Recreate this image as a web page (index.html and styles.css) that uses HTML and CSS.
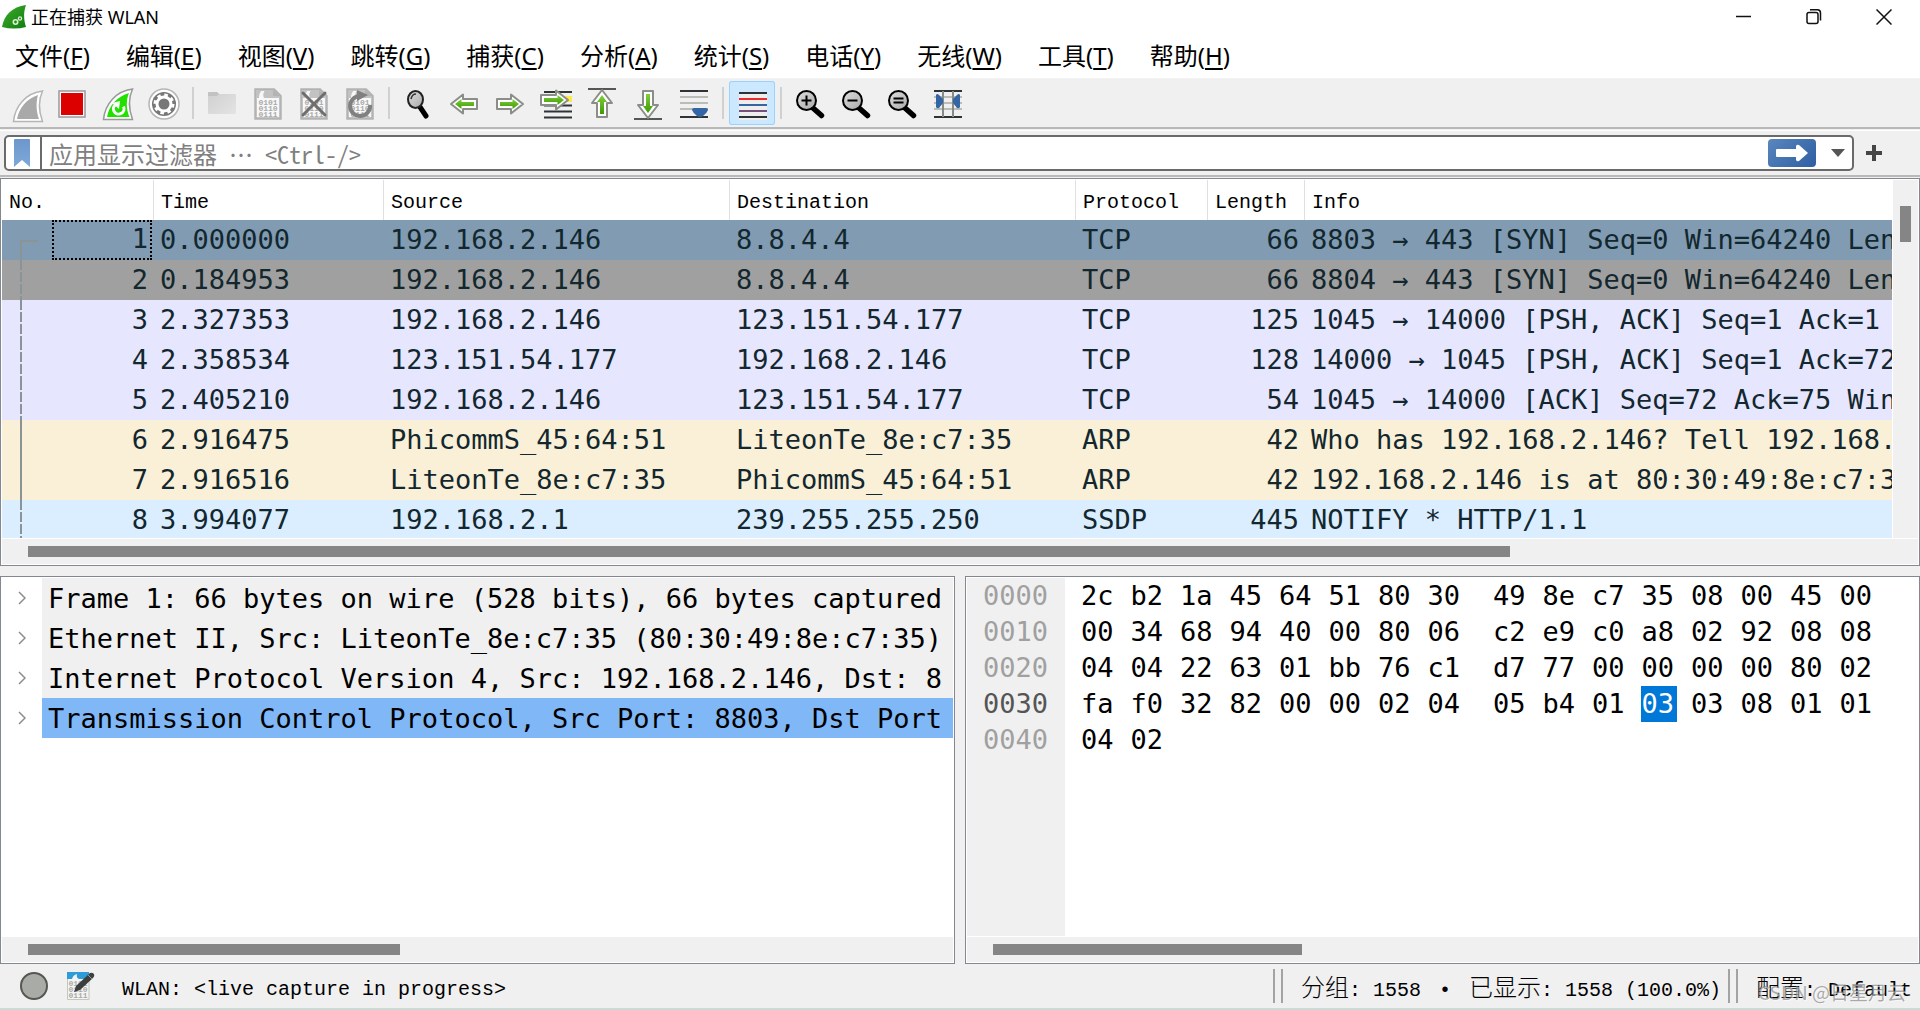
FILE: index.html
```html
<!DOCTYPE html>
<html lang="zh-CN">
<head>
<meta charset="utf-8">
<title>正在捕获 WLAN</title>
<link rel="stylesheet" href="styles.css">
</head>
<body>
<svg width="0" height="0" class="defs" aria-hidden="true">
  <defs>
    <linearGradient id="leaf" x1="0" y1="0" x2="0" y2="1"><stop offset="0" stop-color="#7fd03c"/><stop offset="1" stop-color="#3f9a06"/></linearGradient>
    <linearGradient id="lens" x1="0" y1="0" x2="1" y2="1"><stop offset="0" stop-color="#dedede"/><stop offset="1" stop-color="#a9a9a9"/></linearGradient>
    <linearGradient id="mark" x1="0" y1="0" x2="0" y2="1"><stop offset="0" stop-color="#6d97cb"/><stop offset="1" stop-color="#7fa8da"/></linearGradient>
    <linearGradient id="app" x1="0" y1="0" x2="1" y2="1"><stop offset="0" stop-color="#3fae2a"/><stop offset="1" stop-color="#107c10"/></linearGradient>
    <linearGradient id="folder" x1="0" y1="0" x2="1" y2="1"><stop offset="0" stop-color="#cfcfcf"/><stop offset="1" stop-color="#e4e4e4"/></linearGradient>
    <g id="doc">
      <path d="M10.500 8.500H29L35.500 15V37.500H10.500Z" fill="#f8f8f8" stroke="#b3b3b3" stroke-width="2.500"/>
      <path d="M11 9H17Q14 12 14 17H11ZM19 11C18 13 18 15 19 17H34.500V15L28 9H20Z" fill="#c2c2c2"/>
      <path d="M28 9V15H35Z" fill="#b3b3b3"/>
      <text x="23" y="24" class="bits">0101</text><text x="23" y="30" class="bits">0110</text><text x="23" y="36" class="bits">0111</text>
    </g>
    <g id="glass">
      <path d="M26 27L34.500 34.500" stroke="#000" stroke-width="5.500" stroke-linecap="round"/>
      <circle cx="19.500" cy="19.500" r="9.500" fill="url(#lens)" stroke="#000" stroke-width="2"/>
    </g>
  </defs>
</svg>

<div class="window">
  <header class="titlebar">
    <svg class="app-icon" width="24" height="24" viewBox="0 0 24 24" aria-hidden="true"><path d="M24 0C10 2 2 10 0 22Q12 25 24 22C22 16 21 8 24 0Z" fill="url(#app)"/><circle cx="13.500" cy="17" r="2.200" fill="none" stroke="#d9f0d4" stroke-width="1.600"/><circle cx="18" cy="13.500" r="1.600" fill="none" stroke="#d9f0d4" stroke-width="1.300"/></svg>
    <h1 class="title">正在捕获 WLAN</h1>
    <div class="window-buttons">
      <button type="button" aria-label="最小化"><svg width="16" height="16" viewBox="0 0 16 16"><path d="M0 7.500H15"/></svg></button>
      <button type="button" aria-label="还原"><svg width="16" height="16" viewBox="0 0 16 16"><rect x="1" y="3.500" width="11" height="11" rx="2"/><path d="M4 .8H11.500Q14.500 1 14.500 4V11.500"/></svg></button>
      <button type="button" aria-label="关闭"><svg width="16" height="16" viewBox="0 0 16 16"><path d="M.5 .5L15.500 15.500M15.500 .5L.5 15.500"/></svg></button>
    </div>
  </header>

  <nav class="menubar">
    <button type="button">文件(<u>F</u>)</button>
    <button type="button">编辑(<u>E</u>)</button>
    <button type="button">视图(<u>V</u>)</button>
    <button type="button">跳转(<u>G</u>)</button>
    <button type="button">捕获(<u>C</u>)</button>
    <button type="button">分析(<u>A</u>)</button>
    <button type="button">统计(<u>S</u>)</button>
    <button type="button">电话(<u>Y</u>)</button>
    <button type="button">无线(<u>W</u>)</button>
    <button type="button">工具(<u>T</u>)</button>
    <button type="button">帮助(<u>H</u>)</button>
  </nav>

  <div class="toolbar" role="toolbar" aria-label="主工具栏">
    <button type="button" aria-label="开始捕获"><svg viewBox="0 0 46 44"><path d="M39.500 10C23 12 12 25 10.500 40.500H39.500C36 31 35 20 39.500 10Z" fill="#fff" stroke="#b5b5b5" stroke-width="1.500"/><path d="M35 14C23 18 16 27 14 38H36C33 30 33 21 35 14Z" fill="#a9a9a9"/></svg></button>
    <button type="button" aria-label="停止捕获"><svg viewBox="0 0 46 44"><rect x="10" y="10" width="26" height="26" fill="#fff" stroke="#999" stroke-width="1.500"/><rect x="12" y="12" width="22" height="22" fill="#d00"/></svg></button>
    <button type="button" aria-label="重新捕获"><svg viewBox="0 0 46 44"><path d="M37.500 8C21 10 10 23 8.500 38.500H37.500C34 29 33 18 37.500 8Z" fill="#fff" stroke="#999" stroke-width="1.500"/><path d="M34 12C21 16 14 25 12 36H34.500C31 28 31 19 34 12Z" fill="#22e000"/><path d="M20 24A5.300 5.300 0 1 0 28.500 25.500" fill="none" stroke="#fff" stroke-width="3"/><path d="M17 22L25 20L24 28Z" fill="#fff"/></svg></button>
    <button type="button" aria-label="捕获选项"><svg viewBox="0 0 46 44"><circle cx="23" cy="23" r="15" fill="#fff" stroke="#b5b5b5" stroke-width="1.500"/><circle cx="23" cy="23" r="12" fill="#777"/><circle cx="23" cy="23" r="7" fill="none" stroke="#fff" stroke-width="3"/><circle cx="23" cy="23" r="9" fill="none" stroke="#fff" stroke-width="3" stroke-dasharray="3.500 3.570"/></svg></button>
    <span class="divider"></span>
    <button type="button" aria-label="打开" disabled><svg viewBox="0 0 46 44"><path d="M9 13Q9 11 11 11H18L20 13H36Q37 13 37 14V32Q37 33 36 33H10Q9 33 9 32Z" fill="url(#folder)"/><path d="M9 15V12Q9 11 10 11H18L20 13L18 15Z" fill="#c2c2c2"/></svg></button>
    <button type="button" aria-label="保存" disabled><svg viewBox="0 0 46 44"><use href="#doc"/></svg></button>
    <button type="button" aria-label="关闭文件" disabled><svg viewBox="0 0 46 44"><use href="#doc"/><path d="M12 12L34 34M34 12L12 34" stroke="#6e6e6e" stroke-width="3" stroke-linecap="round"/></svg></button>
    <button type="button" aria-label="重新加载" disabled><svg viewBox="0 0 46 44"><use href="#doc"/><path d="M23 15A10 10 0 1 0 33 24" fill="none" stroke="#808080" stroke-width="4"/><path d="M20 9L31 14L20 20Z" fill="#808080"/></svg></button>
    <span class="divider"></span>
    <button type="button" aria-label="查找分组"><svg viewBox="0 0 46 44"><path d="M25 26L31 35" stroke="#000" stroke-width="5" stroke-linecap="round"/><ellipse cx="20.500" cy="18.500" rx="7.500" ry="8.500" fill="url(#lens)" stroke="#222" stroke-width="2"/><path d="M16 18Q17 13 21 13" fill="none" stroke="#333" stroke-width="1.500"/></svg></button>
    <button type="button" aria-label="后退"><svg viewBox="0 0 46 44"><path d="M10 23L22 13.500V18H36V28H22V32.500Z" fill="#fff" stroke="#8b8d88" stroke-width="2" stroke-linejoin="round"/><path d="M14 23L20.500 18V21H33V25H20.500V28Z" fill="url(#leaf)"/></svg></button>
    <button type="button" aria-label="前进"><svg viewBox="0 0 46 44"><path d="M36 23L24 13.500V18H10V28H24V32.500Z" fill="#fff" stroke="#8b8d88" stroke-width="2" stroke-linejoin="round"/><path d="M32 23L25.500 18V21H13V25H25.500V28Z" fill="url(#leaf)"/></svg></button>
    <button type="button" aria-label="转到分组"><svg viewBox="0 0 46 44"><path d="M11 11H39M11 24.500H39M11 30.500H39M11 36.500H39" stroke="#2e3436" stroke-width="2"/><path d="M28 15H39V21H28Z" fill="#fce94f"/><path d="M35 19L23 9.500V14H8V24H23V28.500Z" fill="#fff" stroke="#8b8d88" stroke-width="2" stroke-linejoin="round"/><path d="M31 19L24.500 14V17H11V21H24.500V24Z" fill="url(#leaf)"/></svg></button>
    <button type="button" aria-label="首个分组"><svg viewBox="0 0 46 44"><path d="M9 8H37" stroke="#555753" stroke-width="2"/><path d="M23 9L33 22H28V36H18V22H13Z" fill="#fff" stroke="#8b8d88" stroke-width="2" stroke-linejoin="round"/><path d="M23 14L28 21H25V33H21V21H18Z" fill="url(#leaf)"/></svg></button>
    <button type="button" aria-label="最后分组"><svg viewBox="0 0 46 44"><path d="M9 38H37" stroke="#555753" stroke-width="2"/><path d="M23 37L33 24H28V10H18V24H13Z" fill="#fff" stroke="#8b8d88" stroke-width="2" stroke-linejoin="round"/><path d="M23 32L28 25H25V13H21V25H18Z" fill="url(#leaf)"/></svg></button>
    <button type="button" aria-label="自动滚动"><svg viewBox="0 0 46 44"><path d="M9 10H37M9 36H37" stroke="#2e3436" stroke-width="2"/><path d="M9 16H37M9 22H37M9 28H37" stroke="#babdb6" stroke-width="2"/><path d="M21 29Q21 27 23 27H35Q37 27 37 29Q36 32 32 35Q29 37 26 35Q22 32 21 29Z" fill="#3465a4"/></svg></button>
    <span class="divider"></span>
    <button type="button" class="checked" aria-label="着色" aria-pressed="true"><svg viewBox="0 0 46 44"><path d="M10 11H38V39H10Z" fill="#eeeeec"/><path d="M10 12H38M10 36H38" stroke="#2e3436" stroke-width="2"/><path d="M10 18H38" stroke="#ef2929" stroke-width="2"/><path d="M10 24H38" stroke="#3465a4" stroke-width="2"/><path d="M10 30H38" stroke="#75507b" stroke-width="2"/></svg></button>
    <span class="divider"></span>
    <button type="button" aria-label="放大"><svg viewBox="0 0 46 44"><use href="#glass"/><path d="M14.500 19.500H24.500M19.500 14.500V24.500" stroke="#000" stroke-width="2"/></svg></button>
    <button type="button" aria-label="缩小"><svg viewBox="0 0 46 44"><use href="#glass"/><path d="M14.500 19.500H24.500" stroke="#000" stroke-width="2"/></svg></button>
    <button type="button" aria-label="正常大小"><svg viewBox="0 0 46 44"><use href="#glass"/><path d="M14.500 17.500H24.500M14.500 21.500H24.500" stroke="#000" stroke-width="2"/></svg></button>
    <button type="button" aria-label="调整列宽"><svg viewBox="0 0 46 44"><path d="M9 10H37M9 36H37" stroke="#2e3436" stroke-width="2"/><path d="M9 16H37M9 22H37M9 28H37" stroke="#babdb6" stroke-width="2"/><path d="M18 10V36M28 10V36" stroke="#888a85" stroke-width="2"/><path d="M11 14Q12 12 14 14L18 18V22L14 27Q12 28 11 26ZM35 14Q34 12 32 14L28 18V22L32 27Q34 28 35 26Z" fill="#3465a4"/></svg></button>
  </div>

  <form class="filterbar">
    <div class="filterbox">
      <button type="button" class="bookmark" aria-label="书签"><svg width="16" height="28" viewBox="0 0 16 28"><path d="M0 1Q0 0 1 0H15Q16 0 16 1V28L8 21L0 28Z" fill="url(#mark)"/></svg></button>
      <input type="text" class="filter" aria-label="显示过滤器" placeholder="应用显示过滤器 … &lt;Ctrl-/&gt;">
      <button type="button" class="apply" aria-label="应用"><svg width="48" height="28" viewBox="0 0 48 28"><path d="M9 10H28V7Q29 5 31 6L40 14L31 22Q29 23 28 21V18H9Q8 18 8 17V11Q8 10 9 10Z" fill="#fff"/></svg></button>
      <button type="button" class="history" aria-label="历史"><svg width="14" height="8" viewBox="0 0 14 8"><path d="M0 0H14L7 8Z" fill="#555"/></svg></button>
    </div>
    <button type="button" class="plus" aria-label="添加"><svg width="16" height="16" viewBox="0 0 16 16"><path d="M8 0V16M0 8H16" stroke="#454545" stroke-width="4"/></svg></button>
  </form>

  <main class="panes">
    <section class="pane packets">
      <div class="packet-view">
        <table class="packet-table">
          <colgroup><col class="c-no"><col class="c-time"><col class="c-addr"><col class="c-addr"><col class="c-proto"><col class="c-len"><col></colgroup>
          <thead><tr><th>No.</th><th>Time</th><th>Source</th><th>Destination</th><th>Protocol</th><th>Length</th><th>Info</th></tr></thead>
          <tbody>
            <tr class="selected"><td class="num first"><span class="focus">1</span></td><td>0.000000</td><td>192.168.2.146</td><td>8.8.4.4</td><td>TCP</td><td class="num">66</td><td>8803 → 443 [SYN] Seq=0 Win=64240 Len=0</td></tr>
            <tr class="syn"><td class="num dashed">2</td><td>0.184953</td><td>192.168.2.146</td><td>8.8.4.4</td><td>TCP</td><td class="num">66</td><td>8804 → 443 [SYN] Seq=0 Win=64240 Len=0</td></tr>
            <tr class="tcp"><td class="num dashed">3</td><td>2.327353</td><td>192.168.2.146</td><td>123.151.54.177</td><td>TCP</td><td class="num">125</td><td>1045 → 14000 [PSH, ACK] Seq=1 Ack=1 Win</td></tr>
            <tr class="tcp"><td class="num dashed">4</td><td>2.358534</td><td>123.151.54.177</td><td>192.168.2.146</td><td>TCP</td><td class="num">128</td><td>14000 → 1045 [PSH, ACK] Seq=1 Ack=72 Win</td></tr>
            <tr class="tcp"><td class="num dashed">5</td><td>2.405210</td><td>192.168.2.146</td><td>123.151.54.177</td><td>TCP</td><td class="num">54</td><td>1045 → 14000 [ACK] Seq=72 Ack=75 Win=5</td></tr>
            <tr class="arp"><td class="num solid">6</td><td>2.916475</td><td>PhicommS_45:64:51</td><td>LiteonTe_8e:c7:35</td><td>ARP</td><td class="num">42</td><td>Who has 192.168.2.146? Tell 192.168.2.1</td></tr>
            <tr class="arp"><td class="num solid">7</td><td>2.916516</td><td>LiteonTe_8e:c7:35</td><td>PhicommS_45:64:51</td><td>ARP</td><td class="num">42</td><td>192.168.2.146 is at 80:30:49:8e:c7:35</td></tr>
            <tr class="ssdp"><td class="num dashed">8</td><td>3.994077</td><td>192.168.2.1</td><td>239.255.255.250</td><td>SSDP</td><td class="num">445</td><td>NOTIFY * HTTP/1.1</td></tr>
          </tbody>
        </table>
      </div>
      <div class="vscroll"><div class="thumb" style="height:10%"></div></div>
      <div class="hscroll"><div class="thumb" style="width:79.5%"></div></div>
    </section>

    <div class="lower">
      <section class="pane">
        <ul class="tree">
          <li><button type="button" class="expand" aria-label="展开"><svg width="8" height="14" viewBox="0 0 8 14"><path d="M1 1L7 7L1 13"/></svg></button><span>Frame 1: 66 bytes on wire (528 bits), 66 bytes captured</span></li>
          <li><button type="button" class="expand" aria-label="展开"><svg width="8" height="14" viewBox="0 0 8 14"><path d="M1 1L7 7L1 13"/></svg></button><span>Ethernet II, Src: LiteonTe_8e:c7:35 (80:30:49:8e:c7:35)</span></li>
          <li><button type="button" class="expand" aria-label="展开"><svg width="8" height="14" viewBox="0 0 8 14"><path d="M1 1L7 7L1 13"/></svg></button><span>Internet Protocol Version 4, Src: 192.168.2.146, Dst: 8</span></li>
          <li class="current"><button type="button" class="expand" aria-label="展开"><svg width="8" height="14" viewBox="0 0 8 14"><path d="M1 1L7 7L1 13"/></svg></button><span>Transmission Control Protocol, Src Port: 8803, Dst Port</span></li>
        </ul>
        <div class="hscroll"><div class="thumb" style="width:41.4%"></div></div>
      </section>

      <section class="pane">
        <div class="bytes">
          <table class="hex">
            <colgroup><col class="c-off"><col span="8"><col class="c-gap"><col span="8"></colgroup>
            <tbody>
              <tr><th>0000</th><td>2c</td><td>b2</td><td>1a</td><td>45</td><td>64</td><td>51</td><td>80</td><td>30</td><td></td><td>49</td><td>8e</td><td>c7</td><td>35</td><td>08</td><td>00</td><td>45</td><td>00</td></tr>
              <tr><th>0010</th><td>00</td><td>34</td><td>68</td><td>94</td><td>40</td><td>00</td><td>80</td><td>06</td><td></td><td>c2</td><td>e9</td><td>c0</td><td>a8</td><td>02</td><td>92</td><td>08</td><td>08</td></tr>
              <tr><th>0020</th><td>04</td><td>04</td><td>22</td><td>63</td><td>01</td><td>bb</td><td>76</td><td>c1</td><td></td><td>d7</td><td>77</td><td>00</td><td>00</td><td>00</td><td>00</td><td>80</td><td>02</td></tr>
              <tr><th class="active">0030</th><td>fa</td><td>f0</td><td>32</td><td>82</td><td>00</td><td>00</td><td>02</td><td>04</td><td></td><td>05</td><td>b4</td><td>01</td><td><mark>03</mark></td><td>03</td><td>08</td><td>01</td><td>01</td></tr>
              <tr><th>0040</th><td>04</td><td>02</td><td></td><td></td><td></td><td></td><td></td><td></td><td></td><td></td><td></td><td></td><td></td><td></td><td></td><td></td><td></td></tr>
            </tbody>
          </table>
        </div>
        <div class="hscroll"><div class="thumb" style="width:34.4%"></div></div>
      </section>
    </div>
  </main>

  <footer class="statusbar">
    <svg width="28" height="28" viewBox="0 0 28 28" aria-hidden="true"><circle cx="14" cy="14" r="13" fill="#a9aca6" stroke="#555753" stroke-width="2"/></svg>
    <svg class="note" width="28" height="28" viewBox="0 0 28 28" aria-hidden="true"><path d="M.5 .5H22V27.500H.5Z" fill="#f4f4f2" stroke="#c4c8b8"/><path d="M0 0H22V7H12Q9 6 10 2Q6 3 5 7H0Z" fill="#2f9bd8"/><text x="11" y="14" class="bits">0101</text><text x="11" y="20" class="bits">0110</text><text x="11" y="26" class="bits">0111</text><path d="M7 20L9 14L23 1Q25 0 27 2Q28 4 26 6L13 18Z" fill="#3c3f40"/><path d="M21 3L25 7" stroke="#999" stroke-width="1"/></svg>
    <span class="message">WLAN: &lt;live capture in progress&gt;</span>
    <span class="grip"></span>
    <span class="counts"><b>分组</b>: 1558 <i>•</i> <b>已显示</b>: 1558 (100.0%)</span>
    <span class="grip"></span>
    <span class="profile"><b>配置</b>: Default<span class="watermark">CSDN @日星月云</span></span>
  </footer>
</div>
</body>
</html>
```
FILE: styles.css
```css
* { box-sizing: border-box; }

body {
  margin: 0;
  background: #f0f0f0;
  color: #000;
  font-family: "Noto Sans", "Noto Sans CJK SC", sans-serif;
}

button {
  margin: 0;
  padding: 0;
  border: 0;
  background: none;
  color: inherit;
  font: inherit;
}

.defs { position: absolute; }

.window {
  display: flex;
  flex-direction: column;
  height: 100vh;
  overflow: hidden;
}

/* Title bar */
.titlebar {
  display: flex;
  align-items: center;
  height: 34px;
  padding: 0 1px 0 2px;
  background: #fff;
}

.title {
  flex: 1;
  margin: 0 0 0 5px;
  font-size: 18px;
  font-weight: 400;
  line-height: 34px;
}

.window-buttons { display: flex; }

.window-buttons button {
  display: flex;
  align-items: center;
  justify-content: center;
  width: 70px;
  height: 34px;
}

.window-buttons svg {
  fill: none;
  stroke: #111;
  stroke-width: 1.5;
}

/* Menu bar */
.menubar {
  display: flex;
  gap: 36px;
  height: 45px;
  padding: 0 15px 1px;
  border-bottom: 1px solid #f3f3f3;
  background: #fff;
  font-size: 24px;
  line-height: 42px;
}

.menubar u {
  text-decoration-thickness: 2px;
  text-underline-offset: 3px;
}

/* Main toolbar */
.toolbar {
  display: flex;
  align-items: center;
  height: 50px;
  padding-left: 3px;
  border-bottom: 2px solid #b8b8b8;
}

.toolbar button {
  width: 46px;
  height: 44px;
}

.toolbar svg {
  display: block;
  width: 46px;
  height: 44px;
}

.toolbar .checked {
  border-radius: 3px;
  background: #cce8ff;
  box-shadow: inset 0 0 0 1px #99d1ff;
}

.divider {
  width: 12px;
  height: 32px;
  border-left: 5px solid #f0f0f0;
  background: linear-gradient(to right, #d0d0d0 2px, transparent 2px);
}

.bits {
  fill: #aaa;
  font-family: "Liberation Mono", monospace;
  font-size: 8px;
  font-weight: 700;
  text-anchor: middle;
}

/* Display filter */
.filterbar {
  display: flex;
  align-items: center;
  height: 47px;
  margin: 1px 0;
  padding: 4px 38px 4px 4px;
  border-top: 1px solid #fff;
  border-bottom: 2px solid #b9bab8;
}

.filterbox {
  display: flex;
  flex: 1;
  align-items: center;
  height: 36px;
  border: 2px solid #6a6a6a;
  border-radius: 5px;
  background: #fff;
}

.bookmark {
  width: 36px;
  height: 32px;
  padding-left: 8px;
  border-right: 2px solid #6a6a6a;
  text-align: left;
}

.bookmark svg,
.apply svg { display: block; }

.filter {
  flex: 1;
  min-width: 0;
  height: 32px;
  padding: 0 7px;
  border: 0;
  outline: 0;
  background: none;
  font-family: "Noto Sans Mono CJK SC", "Noto Sans CJK SC", sans-serif;
  font-size: 24px;
}

.filter::placeholder {
  color: #808080;
  font-weight: 300;
}

.apply {
  border-radius: 4px;
  background: linear-gradient(135deg, #5a86bd, #2e5fa3);
}

.history {
  display: flex;
  justify-content: center;
  width: 36px;
  padding-left: 8px;
}

.plus {
  display: flex;
  margin-left: 12px;
}

/* Panes */
.panes {
  display: grid;
  flex: 1;
  grid-template-rows: minmax(0, 1fr) minmax(0, 1fr);
  gap: 10px;
  min-height: 0;
}

.lower {
  display: grid;
  grid-template-rows: minmax(0, 1fr);
  grid-template-columns: minmax(0, 1fr) minmax(0, 1fr);
  gap: 10px;
}

.pane {
  display: grid;
  grid-template-rows: minmax(0, 1fr) 25px;
  grid-template-columns: minmax(0, 1fr);
  gap: 1px;
  padding: 1px;
  border: 1px solid #828790;
  background: #fff;
  font-family: "DejaVu Sans Mono", monospace;
  font-size: 27px;
}

.packets { grid-template-columns: minmax(0, 1fr) 25px; }

.packet-view { overflow: hidden; }

.packet-table {
  width: 100%;
  border-spacing: 0;
  table-layout: fixed;
}

.c-no { width: 152px; }
.c-time { width: 230px; }
.c-addr { width: 346px; }
.c-proto { width: 132px; }
.c-len { width: 97px; }

.packet-table th,
.packet-table td {
  height: 40px;
  padding: 0 0 0 6px;
  overflow: hidden;
  line-height: 38px;
  text-align: left;
  white-space: nowrap;
}

.packet-table th {
  padding: 6px 0 0 7px;
  border-right: 1px solid #e0e0e0;
  font-family: "Liberation Mono", monospace;
  font-size: 20px;
  font-weight: 400;
  line-height: 34px;
}

.packet-table th:last-child { border-right: 0; }

.packet-table td { color: #12272e; }

.packet-table .num {
  padding-right: 6px;
  text-align: right;
}

.selected { background: #809bb2; }
.syn { background: #a0a0a0; }
.tcp { background: #e7e6ff; }
.arp { background: #faf0d7; }
.ssdp { background: #daeeff; }

.packet-table .first {
  padding-right: 2px;
  background:
    linear-gradient(#8a9496, #8a9496) 18px 20px / 2px 20px no-repeat,
    linear-gradient(#8a9496, #8a9496) 18px 20px / 18px 2px no-repeat;
}

.dashed { background: repeating-linear-gradient(#8a9496 0 10px, transparent 10px 12px) 18px 0 / 2px 100% no-repeat; }
.solid { background: linear-gradient(#8a9496, #8a9496) 18px 0 / 2px 100% no-repeat; }

.focus {
  display: block;
  height: 40px;
  margin-left: 44px;
  padding-right: 2px;
  border: 2px dotted #000;
  line-height: 34px;
}

/* Scroll bars */
.hscroll {
  grid-column: 1 / -1;
  padding: 7px 26px;
  background: #f0f0f0;
}

.vscroll {
  padding: 26px 7px;
  background: #f0f0f0;
}

.thumb { background: #858585; }
.hscroll .thumb { height: 11px; }
.vscroll .thumb { width: 11px; min-height: 36px; }

/* Packet details */
.tree {
  margin: 0;
  padding: 0;
  overflow: hidden;
  list-style: none;
}

.tree li {
  display: flex;
  height: 40px;
  line-height: 42px;
}

.expand {
  display: flex;
  flex: none;
  align-items: center;
  width: 40px;
  padding-left: 16px;
}

.expand svg {
  fill: none;
  stroke: #8c8c8c;
  stroke-width: 1.5;
}

.tree span {
  flex: 1;
  min-width: 0;
  padding-left: 6px;
  overflow: hidden;
  background: #f0f0f0;
  white-space: nowrap;
}

.tree .current span { background: #80b7f7; }

/* Packet bytes */
.bytes {
  padding-right: 29px;
  overflow: hidden;
  background: linear-gradient(to right, #f0f0f0 98px, transparent 98px);
}

.hex {
  width: 100%;
  border-spacing: 0;
  table-layout: fixed;
}

.c-off { width: 114px; }
.c-gap { width: 16px; }

.hex th,
.hex td {
  height: 36px;
  padding: 0;
  line-height: 36px;
  text-align: left;
}

.hex th {
  padding-left: 16px;
  color: #a0a0a0;
  font-weight: 400;
}

.hex .active { color: #555; }

.hex mark {
  display: block;
  width: 36px;
  margin-left: -1px;
  padding-left: 1px;
  background: #0078d7;
  color: #fff;
}

/* Status bar */
.statusbar {
  display: flex;
  align-items: center;
  height: 46px;
  padding: 0 8px 0 20px;
  border-bottom: 2px solid #cbdcd6;
  font-family: "Liberation Mono", "Noto Sans CJK SC", monospace;
  font-size: 20px;
  white-space: nowrap;
}

.statusbar b {
  font-family: "Noto Sans CJK SC", sans-serif;
  font-size: 24px;
  font-weight: 300;
  line-height: 40px;
}

.statusbar i {
  display: inline-block;
  width: 24px;
  font-style: normal;
  text-align: center;
}

.note { margin-left: 19px; }

.message {
  flex: 1;
  margin-left: 27px;
  padding-top: 6px;
}

.grip {
  width: 10px;
  height: 34px;
  border: solid #a3a3a3;
  border-width: 0 2px;
}

.counts { margin: 0 7px 0 18px; }

.profile {
  position: relative;
  margin-left: 18px;
}

.watermark {
  position: absolute;
  right: 6px;
  bottom: 0;
  color: rgba(120, 120, 120, 0.6);
  font-family: "Noto Sans CJK SC", sans-serif;
  font-size: 19px;
  line-height: 28px;
  text-shadow: 1px 1px 0 rgba(255, 255, 255, 0.6);
}
```
